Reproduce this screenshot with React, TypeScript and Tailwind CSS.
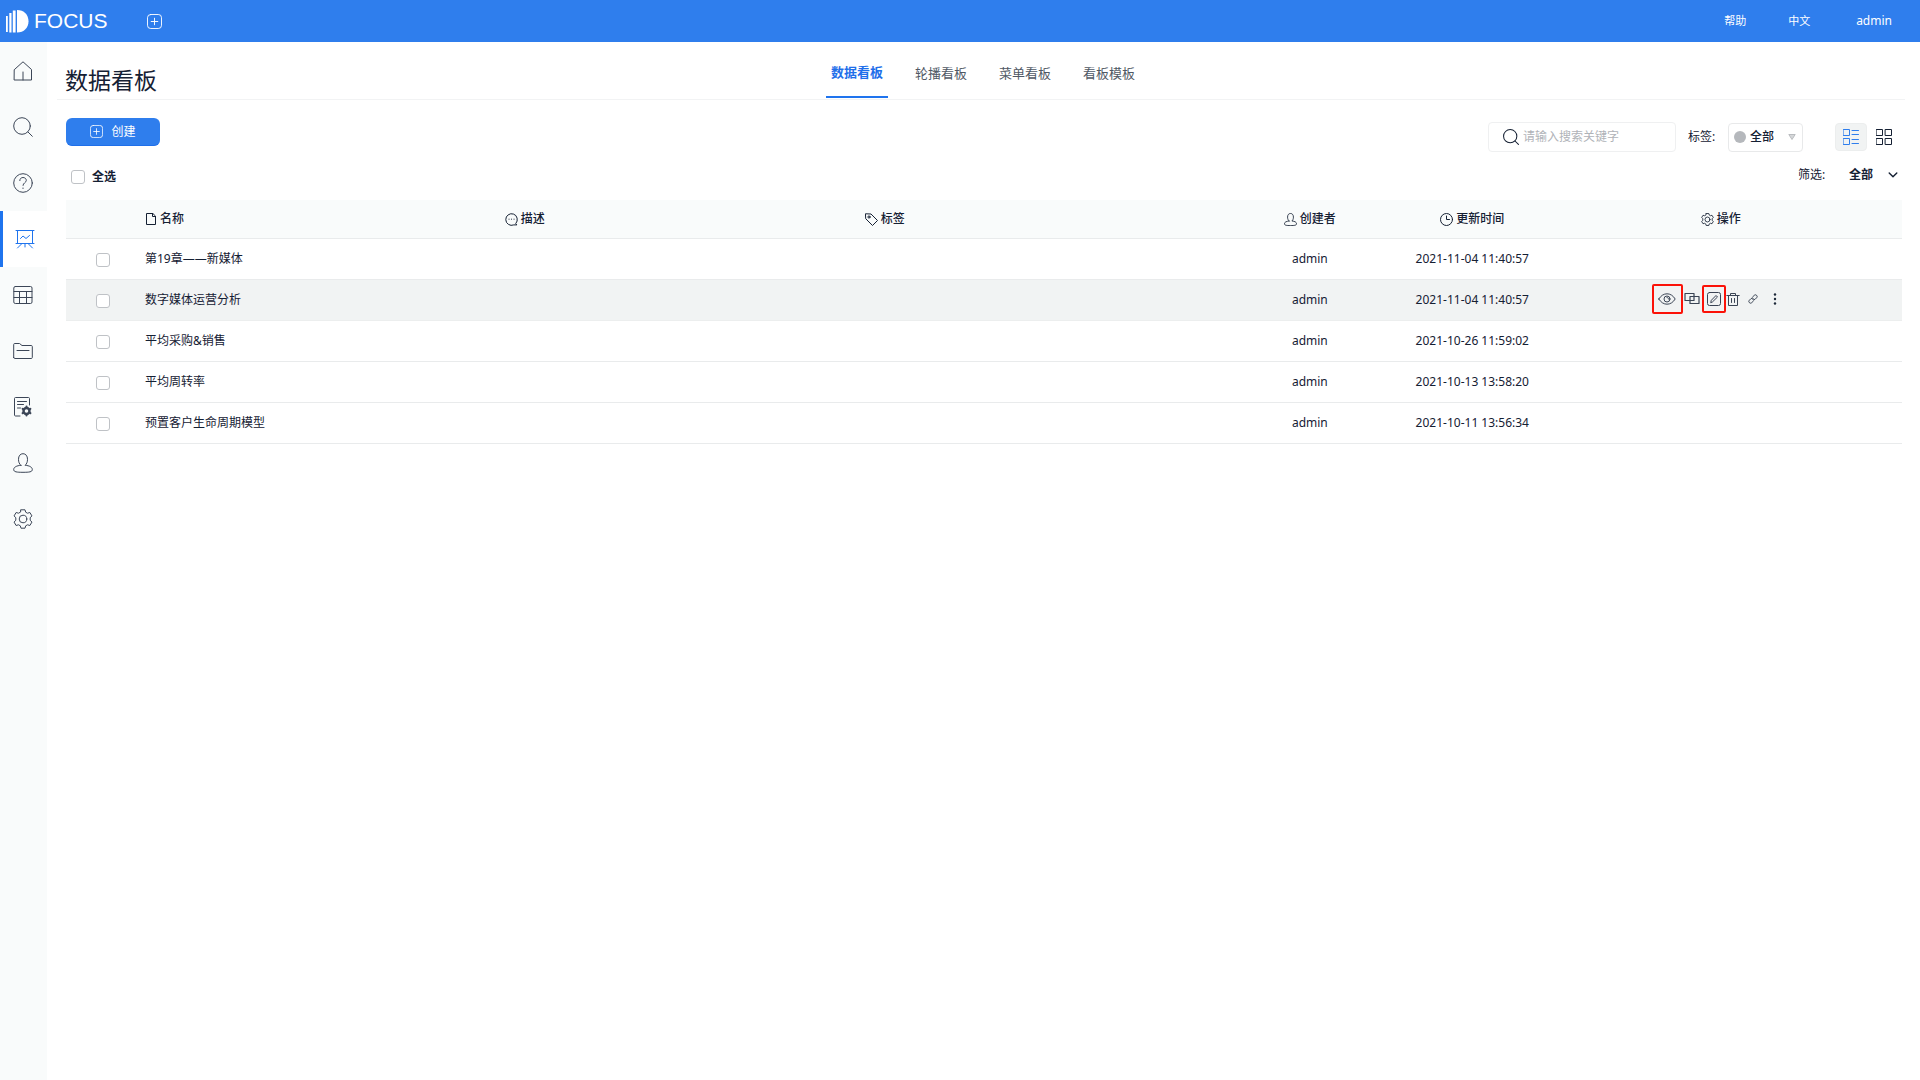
import { useState, type ReactNode } from "react";

type IconProps = { size?: number; box?: number; className?: string; children?: ReactNode; sw?: number };

function Svg({ size = 20, box = 20, className = "", children, sw = 1 }: IconProps) {
  return (
    <svg
      width={size}
      height={size}
      viewBox={`0 0 ${box} ${box}`}
      fill="none"
      stroke="currentColor"
      strokeWidth={sw}
      strokeLinecap="round"
      strokeLinejoin="round"
      className={`shrink-0 ${className}`}
      aria-hidden="true"
    >
      {children}
    </svg>
  );
}

const GEAR =
  "M8 .8h4l.7 2.4 1.8 1 2.4-.7 2 3.4-1.7 1.9v2.4l1.7 1.9-2 3.4-2.4-.7-1.8 1-.7 2.4H8l-.7-2.4-1.8-1-2.4.7-2-3.4 1.7-1.9V8.800L1.100 6.900l2-3.400 2.400.700 1.800-1z";

const Home = () => (
  <Svg>
    <path d="M1.500 8.500 10 .8l8.500 7.700v10.500h-17zM10 11v8" />
  </Svg>
);
const Search = ({ size = 20 }: { size?: number }) => (
  <Svg size={size} sw={size < 20 ? 1.300 : 1}>
    <circle cx="9" cy="9" r="8.300" />
    <path d="m15 15 4.300 4.300" />
  </Svg>
);
const Help = () => (
  <Svg>
    <circle cx="10" cy="10" r="9.300" />
    <path d="M6.800 7.600C6.800 5.600 8.200 4.500 10 4.500s3.300 1.200 3.300 2.900c0 2.200-3.300 2.500-3.300 5M10 15v.5" />
  </Svg>
);
const Board = () => (
  <Svg className="text-[#1f74ee]">
    <path d="M1 1.500h18M2.500 1.500v13M17.500 1.500v13M1 14.500h18M10 14.500v3.500M6.500 15l-4 4M13.500 15l4 4M5.500 9.500l2.500-2.500 3 2.500 3.500-3" />
  </Svg>
);
const TableIcon = () => (
  <Svg>
    <rect x=".8" y="1.500" width="18.200" height="17" rx="1.500" />
    <path d="M1 6.500h18M1 12.500h18M6.500 6.500v12M13.500 6.500v12" />
  </Svg>
);
const Folder = () => (
  <Svg>
    <path d="M.7 16.500v-13c0-.7.400-1 1-1h4.800l2.500 2h9.300c.6 0 1 .4 1 1v11c0 .6-.4 1-1 1H1.700c-.6 0-1-.4-1-1zM4 9.500h12" />
  </Svg>
);
const Report = () => (
  <Svg>
    <path d="M7 19H2.500c-.6 0-1-.4-1-1V1.500c0-.6.400-1 1-1H15.500c.6 0 1 .4 1 1V8M4.500 4.500h9M4.500 7.500h6M4.500 11h3" />
    <circle cx="13.500" cy="14" r="3" strokeWidth="2.400" />
    <path
      d="M13.500 9.500v1M13.500 17.500v1M9.600 11.800l.9.500M16.500 15.700l.9.500M9.600 16.200l.9-.5M16.500 12.300l.9-.5"
      strokeWidth="2"
    />
  </Svg>
);
const User = ({ size = 20 }: { size?: number }) => (
  <Svg size={size} sw={size < 16 ? 1.300 : 1}>
    <path d="M7.900 12.300C6.300 11 5.500 9 5.500 6.300 5.500 2.800 7.300.7 10 .7s4.500 2.100 4.500 5.600c0 2.700-.8 4.700-2.400 6 4.400.3 7.200 1.900 7.200 4.200 0 2.500-3 2.800-9.300 2.800S.7 19 .7 16.500c0-2.300 2.800-3.900 7.200-4.200z" />
  </Svg>
);
const Gear = ({ size = 20 }: { size?: number }) => (
  <Svg size={size} sw={size < 16 ? 1.300 : 1}>
    <path d={GEAR} />
    <circle cx="10" cy="10" r="3.800" />
  </Svg>
);
const PlusBox = ({ size }: { size: number }) => (
  <Svg size={size} box={16}>
    <rect x=".5" y=".5" width="15" height="15" rx="3.500" />
    <path d="M8 4.500v7M4.500 8h7" />
  </Svg>
);

const navItems = [
  { label: "首页", icon: <Home /> },
  { label: "搜索", icon: <Search /> },
  { label: "问答", icon: <Help /> },
  { label: "数据看板", icon: <Board />, active: true },
  { label: "数据表", icon: <TableIcon /> },
  { label: "文件夹", icon: <Folder /> },
  { label: "报表管理", icon: <Report /> },
  { label: "用户", icon: <User /> },
  { label: "系统设置", icon: <Gear /> },
];

const tabs = ["数据看板", "轮播看板", "菜单看板", "看板模板"];

const rows = [
  { name: "第19章——新媒体", time: "2021-11-04 11:40:57" },
  { name: "数字媒体运营分析", time: "2021-11-04 11:40:57", active: true },
  { name: "平均采购&销售", time: "2021-10-26 11:59:02" },
  { name: "平均周转率", time: "2021-10-13 13:58:20" },
  { name: "预置客户生命周期模型", time: "2021-10-11 13:56:34" },
];

const checkbox =
  "block size-[14px] shrink-0 appearance-none rounded-[3px] border border-[#bfc2c6] bg-white checked:bg-[#2f7eed]";

function Head({ icon, children, align = "px-0" }: { icon: ReactNode; children: ReactNode; align?: string }) {
  return (
    <th scope="col" className="p-0 pt-px font-medium">
      <span className={`flex items-center gap-[3px] ${align}`}>
        {icon}
        <span>{children}</span>
      </span>
    </th>
  );
}

function RowActions() {
  return (
    <div className="flex items-center pb-[2px] pl-[106px] text-[#3a4454]">
      <button type="button" aria-label="查看" className="flex h-[30px] w-[31px] items-center justify-center rounded-xs border-2 border-[#fb1208]">
        <Svg size={18} box={18}>
          <path d="M.8 9C3 5.500 5.800 3.800 9 3.800S15 5.500 17.200 9C15 12.500 12.200 14.200 9 14.200S3 12.500.8 9z" />
          <circle cx="9" cy="9" r="3" />
          <path d="M9 7.500c1 0 1.500.6 1.500 1.500" />
        </Svg>
      </button>
      <button type="button" aria-label="复制" className="flex w-[19px] justify-center">
        <Svg size={16} box={16} sw={1.200}>
          <path d="M5.500 9.500H1v-7h9v3M6 5.500h9v7H6zM10 5.500v4H6" />
        </Svg>
      </button>
      <button type="button" aria-label="编辑" className="flex h-[28px] w-[24px] items-center justify-center rounded-xs border-2 border-[#fb1208]">
        <Svg size={14} box={14}>
          <rect x=".5" y=".5" width="13" height="13" rx="2" />
          <path d="m3.800 10.300.5-2L9 3.500l1.500 1.500-4.800 4.700z" />
        </Svg>
      </button>
      <button type="button" aria-label="删除" className="flex w-[15px] justify-center">
        <Svg size={14} box={14}>
          <path d="M.8 3.500h12.400M4.500 3.500v-2h5v2M2.500 3.500v10h9v-10M5.500 6.500v4M8.500 6.500v4" />
        </Svg>
      </button>
      <button type="button" aria-label="链接" className="flex w-[25px] justify-center">
        <Svg size={10} box={10}>
          <path d="M4.600 3 6.300 1.300a1.700 1.700 0 0 1 2.400 2.400L7 5.400a1.700 1.700 0 0 1-2.400 0M5.400 7 3.700 8.700a1.700 1.700 0 0 1-2.400-2.400L3 4.600a1.700 1.700 0 0 1 2.400 0" />
        </Svg>
      </button>
      <button type="button" aria-label="更多" className="flex w-[19px] justify-center">
        <svg width="4" height="12" viewBox="0 0 4 12" fill="#1c2838" aria-hidden="true">
          <circle cx="2" cy="1.500" r="1.200" />
          <circle cx="2" cy="6" r="1.200" />
          <circle cx="2" cy="10.500" r="1.200" />
        </svg>
      </button>
    </div>
  );
}

export default function App() {
  const [tab, setTab] = useState(0);
  return (
    <div className="flex min-h-screen flex-col bg-white font-['Noto_Sans','Noto_Sans_CJK_SC',sans-serif] text-xs text-[#152033]">
      <header className="flex h-[42px] items-center bg-[#2f7eed] text-white">
        <a href="#" aria-label="FOCUS" className="flex w-[147px] items-center gap-[5px] pl-[6px]">
          <svg width="23" height="24" viewBox="0 0 23 24" fill="#fff" aria-hidden="true">
            <rect x="0" y="7" width="1.800" height="16" />
            <rect x="3.300" y="4" width="2.200" height="19.500" />
            <rect x="6.800" y="1.500" width="2.800" height="22" />
            <path d="M11 1C18 1 22.500 5.600 22.500 12.300S18 23.500 11 23.500z" />
          </svg>
          <span className="font-['Liberation_Sans',sans-serif] text-[21px] leading-6">FOCUS</span>
        </a>
        <button type="button" aria-label="新建">
          <PlusBox size={15} />
        </button>
        <nav className="ml-auto flex items-center pr-[28px] text-[11px]">
          <a href="#" className="w-[64px]">帮助</a>
          <a href="#" className="w-[68px]">中文</a>
          <a href="#" className="text-xs">admin</a>
        </nav>
      </header>

      <div className="flex flex-1">
        <nav aria-label="主菜单" className="flex w-[47px] shrink-0 flex-col bg-[#f9fbfb] pt-px text-[#3c4657]">
          {navItems.map((n) => (
            <a
              key={n.label}
              href="#"
              aria-label={n.label}
              className={
                n.active
                  ? "flex h-[56px] items-center justify-center border-l-3 border-[#1f74ee] bg-white"
                  : "flex h-[56px] items-center justify-center pr-px"
              }
            >
              {n.icon}
            </a>
          ))}
        </nav>

        <main className="min-w-0 flex-1">
          <div className="ml-[10px] mr-[15px] grid h-[58px] grid-cols-[1fr_auto_1fr] border-b border-[#f2f3f4]">
            <h1 className="self-center pl-2 pt-[18px] text-[23px] leading-8">数据看板</h1>
            <div role="tablist" className="ml-[4px] flex gap-[22px] pb-px text-[13px]">
              {tabs.map((t, i) => (
                <button
                  key={t}
                  type="button"
                  role="tab"
                  aria-selected={i === tab}
                  onClick={() => setTab(i)}
                  className={
                    i === tab
                      ? "border-b-2 border-[#1f74ee] px-[5px] pt-[8px] font-bold text-[#1f6fea]"
                      : "border-b-2 border-transparent px-[5px] pt-[9px] text-[#4f5864]"
                  }
                >
                  {t}
                </button>
              ))}
            </div>
          </div>

          <div className="pl-[19px] pr-[18px]">
            <div className="flex items-start pt-[18px]">
              <button
                type="button"
                className="flex h-[28px] w-[94px] items-center justify-center gap-2 rounded-md border-b border-[#1f6fea] bg-[#2f7eed] text-white"
              >
                <PlusBox size={13} />
                创建
              </button>
              <div className="ml-auto flex items-center pt-[4px] pr-[10px]">
                <label className="flex h-[30px] w-[188px] items-center rounded border border-[#eff0f1] pl-[14px]">
                  <Search size={16} />
                  <input
                    type="text"
                    aria-label="搜索"
                    placeholder="请输入搜索关键字"
                    className="ml-1 w-[140px] bg-transparent outline-none placeholder:text-[#b0b3b8]"
                  />
                </label>
                <span className="ml-[12px] w-[40px]">标签:</span>
                <button type="button" aria-haspopup="listbox" className="flex h-[29px] w-[75px] items-center rounded border border-[#e8e9ea] pl-[5px] font-medium">
                  <span className="mr-[4px] size-[12px] rounded-full bg-[#b5b8bc]" />
                  全部
                  <svg width="8" height="7" viewBox="0 0 8 7" className="ml-[14px]" fill="#d5d7d9" stroke="#b9bcbf" aria-hidden="true">
                    <path d="M.8.5h6.400L4 5.500z" />
                  </svg>
                </button>
                <button type="button" aria-label="列表视图" className="ml-[32px] flex h-[28px] w-[32px] items-center justify-center rounded border border-[#eceeee] bg-[#f1f3f3] text-[#2f7eed]">
                  <Svg size={16} box={16}>
                    <path d="M.5.5h6v6h-6zM.5 9.500h6v6h-6zM9 1.500h6.500M9 5.500h6.500M9 10.500h6.500M9 14.500h6.500" />
                  </Svg>
                </button>
                <button type="button" aria-label="卡片视图" className="ml-[9px]">
                  <Svg size={16} box={16}>
                    <path d="M.5.5h6v6h-6zM9.500.5h6v6h-6zM.5 9.500h6v6h-6zM9.500 9.500h6v6h-6z" />
                  </Svg>
                </button>
              </div>
            </div>

            <div className="flex h-[48px] items-center pt-[2px]">
              <label className="flex items-center gap-[7px] pl-[5px] font-bold">
                <input type="checkbox" className={checkbox} />
                全选
              </label>
              <span className="mb-[4px] ml-auto w-[51px]">筛选:</span>
              <button type="button" aria-haspopup="listbox" className="mb-[4px] mr-[4px] flex items-center gap-[15px] font-bold">
                全部
                <Svg size={10} box={10} sw={1.400}>
                  <path d="m1.200 3 3.800 3.800L8.800 3" />
                </Svg>
              </button>
            </div>

            <table className="w-full table-fixed border-collapse text-left">
              <colgroup>
                <col className="w-[4.3%]" />
                <col className="w-[19.6%]" />
                <col className="w-[19.6%]" />
                <col className="w-[19.4%]" />
                <col className="w-[9.7%]" />
                <col className="w-[8%]" />
                <col className="w-[19.4%]" />
              </colgroup>
              <thead>
                <tr className="h-[38px] border-b border-[#e9ebec] bg-[#f9fbfb]">
                  <td />
                  <Head
                    icon={
                      <Svg size={12} box={12}>
                        <path d="M7.500.5h-6v11h9v-8zM7.500.5v3h3" />
                      </Svg>
                    }
                  >
                    名称
                  </Head>
                  <Head
                    icon={
                      <Svg size={13} box={13}>
                        <path d="M11 10.300A5.800 5.800 0 1 0 8.800 11.900h2.700zM4 6.200h.1M6.500 6.200h.1M9 6.200h.1" />
                      </Svg>
                    }
                  >
                    描述
                  </Head>
                  <Head
                    icon={
                      <Svg size={13} box={13}>
                        <path d="M.8.800 6 1l6.500 6.500-5 5L1 6z" />
                        <circle cx="4" cy="4" r="1.100" />
                      </Svg>
                    }
                  >
                    标签
                  </Head>
                  <Head align="justify-center" icon={<User size={13} />}>创建者</Head>
                  <Head
                    align="justify-center"
                    icon={
                      <Svg size={13} box={13}>
                        <circle cx="6.500" cy="6.500" r="6" />
                        <path d="M6.500 3v3.500h3" />
                      </Svg>
                    }
                  >
                    更新时间
                  </Head>
                  <Head align="justify-center pr-[6px]" icon={<Gear size={13} />}>操作</Head>
                </tr>
              </thead>
              <tbody>
                {rows.map((r) => (
                  <tr
                    key={r.name}
                    className={r.active ? "h-[41px] border-b border-[#eceeee] bg-[#f1f3f3]" : "h-[41px] border-b border-[#e9ebec]"}
                  >
                    <td className="p-0 pl-[30px] pt-[2px]">
                      <input type="checkbox" aria-label={r.name} className={checkbox} />
                    </td>
                    <td className="p-0">{r.name}</td>
                    <td className="p-0" />
                    <td className="p-0" />
                    <td className="p-0 text-center">admin</td>
                    <td className="p-0 text-center whitespace-nowrap">{r.time}</td>
                    <td className="p-0">{r.active && <RowActions />}</td>
                  </tr>
                ))}
              </tbody>
            </table>
          </div>
        </main>
      </div>
    </div>
  );
}
